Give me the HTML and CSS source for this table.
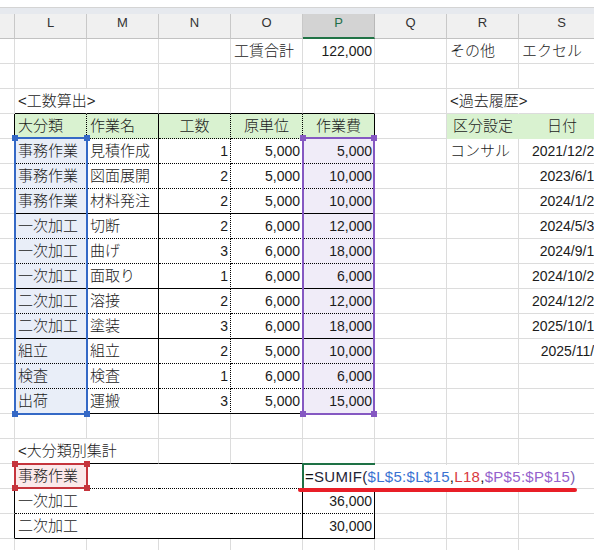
FILE: index.html
```html
<!DOCTYPE html>
<html lang="ja">
<head>
<meta charset="utf-8">
<title>工数算出</title>
<link rel="stylesheet" href="styles.css">
</head>
<body>
<div class="page">
  <div class="topbar"></div>

  <div class="row hd">
    <div class="c k"></div><div class="c">L</div><div class="c">M</div><div class="c">N</div><div class="c">O</div><div class="c hs">P</div><div class="c">Q</div><div class="c">R</div><div class="c s">S</div>
  </div>

  <div class="row">
    <div class="c k"></div><div class="c"></div><div class="c"></div><div class="c"></div><div class="c">工賃合計</div><div class="c n">122,000</div><div class="c"></div><div class="c">その他</div><div class="c s">エクセル</div>
  </div>
  <div class="row">
    <div class="c k"></div><div class="c"></div><div class="c"></div><div class="c"></div><div class="c"></div><div class="c"></div><div class="c"></div><div class="c"></div><div class="c s"></div>
  </div>
  <div class="row us">
    <div class="c k"></div><div class="c t ov">&lt;工数算出&gt;</div><div class="c t"></div><div class="c t"></div><div class="c t"></div><div class="c t"></div><div class="c"></div><div class="c ov">&lt;過去履歴&gt;</div><div class="c s"></div>
  </div>

  <div class="row ud">
    <div class="c k tl"></div><div class="c t g bd">大分類</div><div class="c t g bs">作業名</div><div class="c t g bd ct">工数</div><div class="c t g bd ct">原単位</div><div class="c t g bs ct">作業費</div><div class="c qg"></div><div class="c g nb ct">区分設定</div><div class="c s g nb ct">日付</div>
  </div>

  <div class="row ud">
    <div class="c k tl"></div><div class="c t bd lb">事務作業</div><div class="c t bs">見積作成</div><div class="c t bd n">1</div><div class="c t bd n">5,000</div><div class="c t bs n pb">5,000</div><div class="c"></div><div class="c">コンサル</div><div class="c s n">2021/12/23</div>
  </div>
  <div class="row ud">
    <div class="c k tl"></div><div class="c t bd lb">事務作業</div><div class="c t bs">図面展開</div><div class="c t bd n">2</div><div class="c t bd n">5,000</div><div class="c t bs n pb">10,000</div><div class="c"></div><div class="c"></div><div class="c s n">2023/6/15</div>
  </div>
  <div class="row us">
    <div class="c k tl"></div><div class="c t bd lb">事務作業</div><div class="c t bs">材料発注</div><div class="c t bd n">2</div><div class="c t bd n">5,000</div><div class="c t bs n pb">10,000</div><div class="c"></div><div class="c"></div><div class="c s n">2024/1/22</div>
  </div>
  <div class="row ud">
    <div class="c k tl"></div><div class="c t bd lb">一次加工</div><div class="c t bs">切断</div><div class="c t bd n">2</div><div class="c t bd n">6,000</div><div class="c t bs n pb">12,000</div><div class="c"></div><div class="c"></div><div class="c s n">2024/5/30</div>
  </div>
  <div class="row ud">
    <div class="c k tl"></div><div class="c t bd lb">一次加工</div><div class="c t bs">曲げ</div><div class="c t bd n">3</div><div class="c t bd n">6,000</div><div class="c t bs n pb">18,000</div><div class="c"></div><div class="c"></div><div class="c s n">2024/9/12</div>
  </div>
  <div class="row us">
    <div class="c k tl"></div><div class="c t bd lb">一次加工</div><div class="c t bs">面取り</div><div class="c t bd n">1</div><div class="c t bd n">6,000</div><div class="c t bs n pb">6,000</div><div class="c"></div><div class="c"></div><div class="c s n">2024/10/21</div>
  </div>
  <div class="row ud">
    <div class="c k tl"></div><div class="c t bd lb">二次加工</div><div class="c t bs">溶接</div><div class="c t bd n">2</div><div class="c t bd n">6,000</div><div class="c t bs n pb">12,000</div><div class="c"></div><div class="c"></div><div class="c s n">2024/12/25</div>
  </div>
  <div class="row us">
    <div class="c k tl"></div><div class="c t bd lb">二次加工</div><div class="c t bs">塗装</div><div class="c t bd n">3</div><div class="c t bd n">6,000</div><div class="c t bs n pb">18,000</div><div class="c"></div><div class="c"></div><div class="c s n">2025/10/10</div>
  </div>
  <div class="row ud">
    <div class="c k tl"></div><div class="c t bd lb">組立</div><div class="c t bs">組立</div><div class="c t bd n">2</div><div class="c t bd n">5,000</div><div class="c t bs n pb">10,000</div><div class="c"></div><div class="c"></div><div class="c s n">2025/11/5</div>
  </div>
  <div class="row ud">
    <div class="c k tl"></div><div class="c t bd lb">検査</div><div class="c t bs">検査</div><div class="c t bd n">1</div><div class="c t bd n">6,000</div><div class="c t bs n pb">6,000</div><div class="c"></div><div class="c"></div><div class="c s"></div>
  </div>
  <div class="row us">
    <div class="c k tl"></div><div class="c t bd lb">出荷</div><div class="c t bs">運搬</div><div class="c t bd n">3</div><div class="c t bd n">5,000</div><div class="c t bs n pb">15,000</div><div class="c"></div><div class="c"></div><div class="c s"></div>
  </div>

  <div class="row">
    <div class="c k"></div><div class="c"></div><div class="c"></div><div class="c"></div><div class="c"></div><div class="c"></div><div class="c"></div><div class="c"></div><div class="c s"></div>
  </div>
  <div class="row us">
    <div class="c k"></div><div class="c t ov">&lt;大分類別集計</div><div class="c t"></div><div class="c t"></div><div class="c t"></div><div class="c t"></div><div class="c"></div><div class="c"></div><div class="c s"></div>
  </div>
  <div class="row ud">
    <div class="c k tl"></div><div class="c t nb rb">事務作業</div><div class="c t nb"></div><div class="c t nb"></div><div class="c t bs"></div><div class="c t bs"></div><div class="c"></div><div class="c"></div><div class="c s"></div>
  </div>
  <div class="row ud">
    <div class="c k tl"></div><div class="c t nb">一次加工</div><div class="c t nb"></div><div class="c t nb"></div><div class="c t bs"></div><div class="c t bs n">36,000</div><div class="c"></div><div class="c"></div><div class="c s"></div>
  </div>
  <div class="row us">
    <div class="c k tl"></div><div class="c t nb">二次加工</div><div class="c t nb"></div><div class="c t nb"></div><div class="c t bs"></div><div class="c t bs n">30,000</div><div class="c"></div><div class="c"></div><div class="c s"></div>
  </div>
  <div class="row">
    <div class="c k"></div><div class="c"></div><div class="c"></div><div class="c"></div><div class="c"></div><div class="c"></div><div class="c"></div><div class="c"></div><div class="c s"></div>
  </div>

  <div class="sel sel-blue"><i class="h tlh"></i><i class="h trh"></i><i class="h blh"></i><i class="h brh"></i></div>
  <div class="sel sel-purple"><i class="h tlh"></i><i class="h trh"></i><i class="h blh"></i><i class="h brh"></i></div>
  <div class="sel sel-red"><i class="h tlh"></i><i class="h trh"></i><i class="h blh"></i><i class="h brh"></i></div>

  <div class="edit"></div>
  <div class="fx">=<span class="fn">SUMIF(</span><span class="rb1">$L$5:$L$15</span>,<span class="rr1">L18</span>,<span class="rp1">$P$5:$P$15</span><span class="cp">)</span></div>
  <div class="underline"></div>
</div>
</body>
</html>
```

FILE: styles.css
```css
* { box-sizing: border-box; }
html, body { margin: 0; padding: 0; background: #fff; }
body {
  width: 594px;
  height: 550px;
  overflow: hidden;
  font-family: "Liberation Sans", "Noto Sans CJK JP", sans-serif;
  font-size: 15px;
  font-weight: 300;
  color: #1b1b1b;
}
.page { position: relative; width: 594px; height: 550px; overflow: hidden; }

.topbar {
  height: 7px;
  margin-top: 7px;
  border-top: 1px solid #d4d4d4;
  background: #e6e9ee;
}

.row { display: flex; height: 25px; }
.c {
  flex: none;
  width: 72px;
  height: 25px;
  padding: 0 3px;
  border-right: 1px solid #dcdcdc;
  border-bottom: 1px solid #dcdcdc;
  line-height: 24px;
  white-space: nowrap;
  overflow: visible;
}
.c.k { width: 15px; padding: 0; }
.c.s { width: 86px; }

/* column header row */
.hd .c {
  background: #f0f0f0;
  border-right: 1px solid #c8c8c8;
  border-bottom: 1px solid #c2c2c2;
  text-align: center;
  font-size: 13px;
  font-weight: 400;
  line-height: 18px;
  color: #333;
}
.hd .c.hs {
  background: #d3d3d3;
  color: #1e6e48;
  border-bottom: 2px solid #217346;
  border-right-color: #b8b8b8;
}

/* alignment */
.n { text-align: right; font-size: 14px; padding-right: 2px; }
.ct { text-align: center; }
.ov { border-right-color: transparent; }

/* fills */
.g { background: #d9f2d0; }
.nb { border-right: none; }
.g.nb { border-bottom-color: transparent; }
.lb { background: #e9eef8; }
.pb { background: #f0ecf8; }
.rb { background: #fbe9ea; }

/* table borders */
.tl { border-right: 1px solid #000; }
.bd { border-right: 1px dotted #000; }
.bs { border-right: 1px solid #000; }
.row.ud .t { border-bottom: 1px dotted #000; }
.row.us .t { border-bottom: 1px solid #000; }

/* reference highlights (overlay) */
.sel { position: absolute; border: 2px solid; }
.sel-blue { left: 14px; top: 137px; width: 74px; height: 278px; border-color: #3569c6; }
.sel-purple { left: 302px; top: 137px; width: 73px; height: 278px; border-color: #8558c2; }
.sel-red { left: 14px; top: 463px; width: 74px; height: 26px; border-color: #c5343c; }
.h { position: absolute; width: 6px; height: 6px; }
.sel-blue .h { background: #3569c6; }
.sel-purple .h { background: #8558c2; }
.sel-red .h { background: #c5343c; }
.tlh { left: -4px; top: -4px; }
.trh { right: -4px; top: -4px; }
.blh { left: -4px; bottom: -4px; }
.brh { right: -4px; bottom: -4px; }

/* editing cell */
.edit {
  position: absolute;
  left: 302px;
  top: 463px;
  width: 73px;
  height: 25px;
  border-top: 2px solid #1e7145;
  border-left: 2px solid #1e7145;
}
.fx {
  position: absolute;
  left: 304px;
  top: 465px;
  width: 276px;
  height: 23px;
  padding-left: 1px;
  background: #fff;
  line-height: 23px;
  font-size: 15px;
  letter-spacing: 0.3px;
  white-space: nowrap;
  color: #111;
}
.fx .fn { color: #1f2536; }
.fx .rb1 { color: #3a72d2; }
.fx .rr1 { color: #d8383e; }
.fx .rp1 { color: #9462cc; }
.fx .cp { color: #7b5fb4; }

.underline {
  position: absolute;
  left: 298px;
  top: 488px;
  width: 279px;
  height: 4px;
  border-radius: 2px;
  background: #e81e27;
}
```
